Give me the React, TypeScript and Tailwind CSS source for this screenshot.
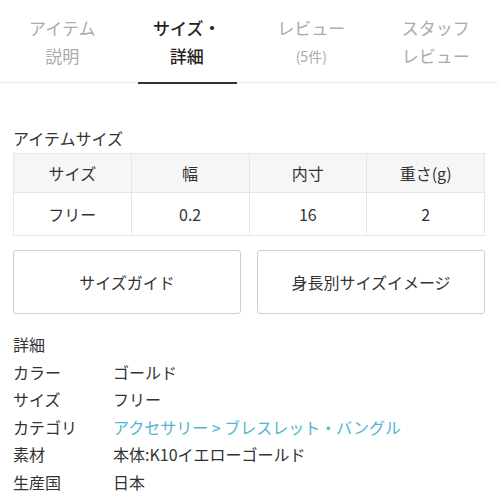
const font = { fontFamily: '"Noto Sans CJK JP", "Noto Sans", sans-serif' };

const tabs = [
  { l1: "アイテム", l2: "説明", active: false, small: false },
  { l1: "サイズ・", l2: "詳細", active: true, small: false },
  { l1: "レビュー", l2: "(5件)", active: false, small: true },
  { l1: "スタッフ", l2: "レビュー", active: false, small: false },
];

const details: { label: string; value: string; link?: boolean }[] = [
  { label: "カラー", value: "ゴールド" },
  { label: "サイズ", value: "フリー" },
  { label: "カテゴリ", value: "アクセサリー > ブレスレット・バングル", link: true },
  { label: "素材", value: "本体:K10イエローゴールド" },
  { label: "生産国", value: "日本" },
];

export default function App() {
  return (
    <div className="w-[498px] h-[498px] overflow-hidden bg-white text-[#333]" style={font}>
      {/* Tabs */}
      <div className="grid grid-cols-4 border-b border-[#ececec] h-[83px]">
        {tabs.map((t) => (
          <div key={t.l1} className="relative flex flex-col items-center pt-[14px]">
            <div
              className={`text-[17px] leading-[28px] ${t.active ? "text-[#222] font-medium" : "text-[#ababab]"}`}
            >
              {t.l1}
            </div>
            <div
              className={`${t.small ? "text-[14px]" : "text-[17px]"} leading-[28px] ${t.active ? "text-[#222] font-medium" : "text-[#ababab]"}`}
            >
              {t.l2}
            </div>
            {t.active && (
              <div className="absolute left-[13px] right-[12px] bottom-[-2px] h-[2px] bg-[#333]" />
            )}
          </div>
        ))}
      </div>

      <div className="px-[13px]">
        {/* Item size */}
        <div className="mt-[45px] text-[16px] leading-[20px]">アイテムサイズ</div>
        <table className="mt-[5px] w-full border-collapse text-[16px] text-center table-fixed">
          <tbody>
            <tr className="bg-[#f6f6f6] h-[39px]">
              <td className="border border-[#e6e6e6]">サイズ</td>
              <td className="border border-[#e6e6e6]">幅</td>
              <td className="border border-[#e6e6e6]">内寸</td>
              <td className="border border-[#e6e6e6]">重さ(g)</td>
            </tr>
            <tr className="h-[43px]">
              <td className="border border-[#e6e6e6]">フリー</td>
              <td className="border border-[#e6e6e6]">0.2</td>
              <td className="border border-[#e6e6e6]">16</td>
              <td className="border border-[#e6e6e6]">2</td>
            </tr>
          </tbody>
        </table>

        {/* Buttons */}
        <div className="mt-[14px] grid grid-cols-2 gap-[16px]">
          <div className="h-[64px] flex items-center justify-center border border-[#cfcfcf] rounded-[3px] text-[16px]">
            サイズガイド
          </div>
          <div className="h-[64px] flex items-center justify-center border border-[#cfcfcf] rounded-[3px] text-[16px]">
            身長別サイズイメージ
          </div>
        </div>

        {/* Details */}
        <div className="mt-[17px] text-[16px] leading-[27.5px]">
          <div>詳細</div>
          {details.map((d) => (
            <div key={d.label} className="flex">
              <div className="w-[100px] shrink-0">{d.label}</div>
              <div className={d.link ? "text-[#52b5cf]" : ""}>{d.value}</div>
            </div>
          ))}
        </div>
      </div>
    </div>
  );
}
